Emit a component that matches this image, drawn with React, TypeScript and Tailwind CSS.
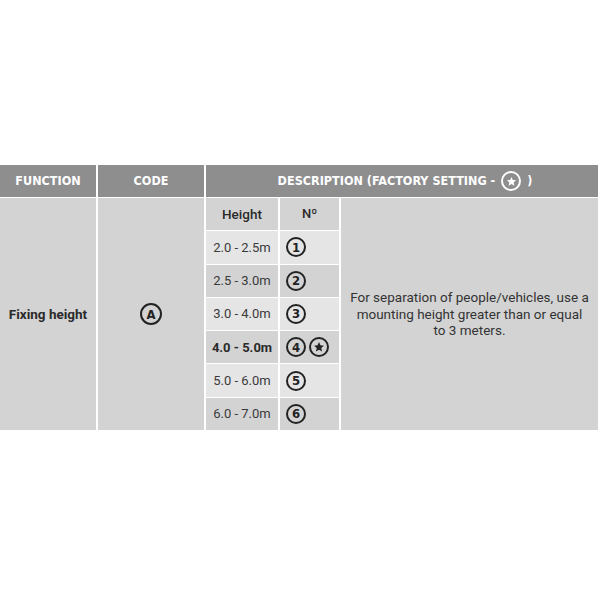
import React from 'react'

const headFont = { fontFamily: '"DejaVu Sans Condensed", "Liberation Sans", sans-serif' }

const Circled = ({ children, size = 'h-[20px] w-[20px]' }: { children: React.ReactNode; size?: string }) => (
  <span
    className={`inline-flex ${size} items-center justify-center rounded-full border-2 border-[#222] text-[13px] font-bold leading-none text-[#222]`}
    style={headFont}
  >
    {children}
  </span>
)

const Star = ({ className }: { className: string }) => (
  <svg viewBox="0 0 24 24" className={className} fill="currentColor">
    <path d="M12 3.5l2.5 5.6 6 .6-4.6 4 1.4 6-5.3-3.2-5.3 3.2 1.4-6-4.6-4 6-.6z" />
  </svg>
)

const rows = [
  { h: '2.0 - 2.5m', n: '1', light: true },
  { h: '2.5 - 3.0m', n: '2', light: false },
  { h: '3.0 - 4.0m', n: '3', light: true },
  { h: '4.0 - 5.0m', n: '4', light: false, factory: true },
  { h: '5.0 - 6.0m', n: '5', light: true },
  { h: '6.0 - 7.0m', n: '6', light: false },
]

export default function App() {
  return (
    <div className="h-[600px] w-[600px] bg-white pt-[165px]" style={{ fontFamily: 'Roboto, "Liberation Sans", sans-serif' }}>
      <div className="flex w-[598px] flex-col gap-[1px] bg-white">
        {/* cabecera */}
        <div className="grid h-[32px] grid-cols-[96px_106px_1fr] gap-x-[2px] text-[12.5px] font-bold uppercase text-white" style={headFont}>
          <div className="flex items-center justify-center bg-[#8e8e8f]">Function</div>
          <div className="flex items-center justify-center bg-[#8e8e8f]">Code</div>
          <div className="flex items-center justify-center gap-[6px] bg-[#8e8e8f] pl-[6px]">
            <span>Description (Factory setting -</span>
            <span className="inline-flex h-[20px] w-[20px] items-center justify-center rounded-full border-2 border-white">
              <Star className="h-[13px] w-[13px]" />
            </span>
            <span>)</span>
          </div>
        </div>

        {/* cuerpo */}
        <div className="grid h-[232px] grid-cols-[96px_106px_1fr] gap-x-[2px] text-[#2a2a2a]">
          <div className="flex items-center justify-center bg-[#d3d3d4] text-[13.5px] font-bold">Fixing height</div>
          <div className="flex items-center justify-center bg-[#d3d3d4]">
            <Circled size="h-[22px] w-[22px]">A</Circled>
          </div>
          <div className="flex bg-[#d3d3d4]">
            <div className="grid w-[135px] grid-cols-[72px_59px] grid-rows-7 gap-x-[2px] gap-y-[1px] bg-white pr-[2px]">
              <div className="flex items-center justify-center bg-[#d3d3d4] text-[13.5px] font-medium">Height</div>
              <div className="flex items-center justify-center bg-[#d3d3d4] text-[13px] font-medium">Nº</div>
              {rows.map((r) => (
                <React.Fragment key={r.n}>
                  <div className={`flex items-center justify-center text-[13px] ${r.light ? 'bg-[#e5e5e6]' : 'bg-[#d3d3d4]'} ${r.factory ? 'font-bold' : 'text-[#3a3a3a]'}`}>
                    {r.h}
                  </div>
                  <div className={`flex items-center gap-[3px] pl-[6px] ${r.light ? 'bg-[#e5e5e6]' : 'bg-[#d3d3d4]'}`}>
                    <Circled>{r.n}</Circled>
                    {r.factory && (
                      <span className="inline-flex h-[20px] w-[20px] items-center justify-center rounded-full border-2 border-[#222] text-[#222]">
                        <Star className="h-[14px] w-[14px]" />
                      </span>
                    )}
                  </div>
                </React.Fragment>
              ))}
            </div>
            <div className="flex flex-1 items-center justify-center px-[4px] text-center text-[13.5px] leading-[16.5px] text-[#333]">
              <p>
                For separation of people/vehicles, use a<br />
                mounting height greater than or equal<br />
                to 3 meters.
              </p>
            </div>
          </div>
        </div>
      </div>
    </div>
  )
}
